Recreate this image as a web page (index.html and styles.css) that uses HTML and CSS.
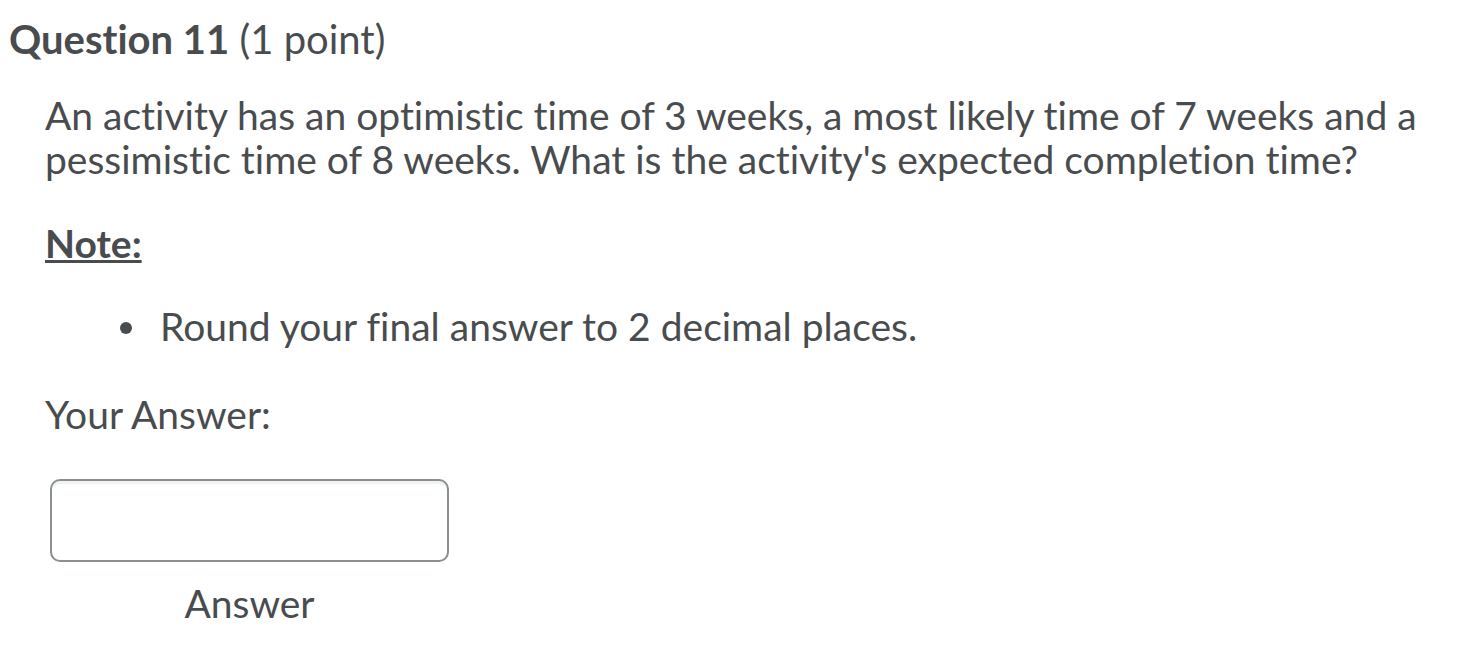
FILE: index.html
```html
<!DOCTYPE html>
<html>
<head>
<meta charset="utf-8">
<link rel="stylesheet" href="styles.css">
</head>
<body>
<div class="question">
  <h2 class="q-title"><strong>Question 11</strong> (1 point)</h2>
  <div class="q-body">
    <p class="q-text">An activity has an optimistic time of 3 weeks, a most likely time of 7 weeks and a pessimistic time of 8 weeks. What is the activity's expected completion time?</p>
    <p class="q-note"><u><strong>Note:</strong></u></p>
    <ul class="q-list">
      <li class="q-item">Round your final answer to 2 decimal places.</li>
    </ul>
    <p class="q-label">Your Answer:</p>
    <div class="answer">
      <div class="answer-box"></div>
      <div class="answer-caption">Answer</div>
    </div>
  </div>
</div>
</body>
</html>
```
FILE: styles.css
```css
html, body {
  margin: 0;
  padding: 0;
  background: #ffffff;
}
body {
  font-family: Lato, "Noto Sans", sans-serif;
  color: #494c4e;
  font-variant-ligatures: none;
}
.question {
  padding: 13px 0 0 9px;
}
.q-title {
  margin: 0;
  font-size: 40px;
  font-weight: 400;
  line-height: 52px;
}
.q-title strong {
  font-weight: 700;
}
.q-body {
  padding-left: 36px;
}
.q-text {
  margin: 28px 0 0 0;
  font-size: 39px;
  line-height: 44px;
  width: 1410px;
}
.q-note {
  margin: 40px 0 0 0;
  font-size: 39px;
  line-height: 44px;
}
.q-list {
  margin: 39px 0 0 0;
  padding-left: 75px;
  list-style: none;
  font-size: 39px;
  line-height: 44px;
}
.q-item {
  display: flex;
  align-items: center;
  gap: 28px;
}
.q-item::before {
  content: "";
  flex: none;
  width: 12px;
  height: 12px;
  border-radius: 50%;
  background: #494c4e;
  margin-top: 4px;
}
.q-label {
  margin: 44px 0 0 0;
  font-size: 39px;
  line-height: 44px;
}
.answer {
  width: 399px;
  margin: 43px 0 0 5px;
}
.answer-box {
  border: 2px solid #8a8f92;
  border-radius: 10px;
  box-shadow: inset 0 3px 0 #f1f2f4;
  box-sizing: border-box;
  height: 83px;
}
.answer-caption {
  text-align: center;
  font-size: 39px;
  line-height: 44px;
  margin-top: 19px;
}
```
